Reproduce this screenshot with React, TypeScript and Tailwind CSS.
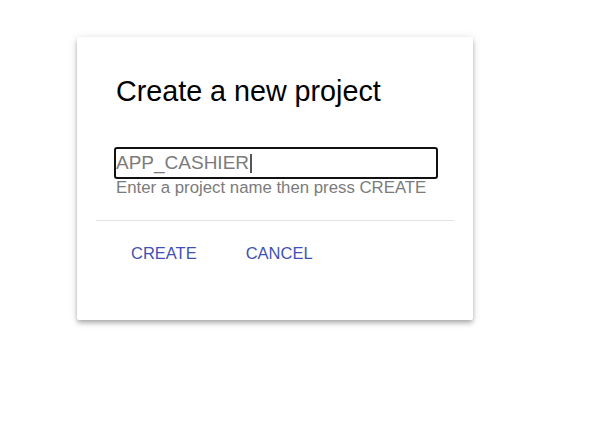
import React from "react";

const NewProjectDialog = () => {
  return (
    <div className="w-[396px] h-[283px] bg-white rounded-[2px] shadow-[0_2px_4px_-1px_rgba(0,0,0,0.2),0_4px_5px_0_rgba(0,0,0,0.14),0_1px_10px_0_rgba(0,0,0,0.12)] pt-[38px] flex flex-col">
      {/* Title */}
      <h2 className="pl-[39px] text-[28.7px] leading-[33px] text-black font-normal">
        Create a new project
      </h2>

      {/* Project name field */}
      <div className="mt-[39px] ml-[37px] mr-[35px]">
        <div className="h-[32px] border-2 border-[#111] rounded-[3px] flex items-center">
          <span className="text-[19px] leading-[22px] text-[#7b7b7b]">APP_CASHIER</span>
          <span className="w-[2px] h-[19px] bg-[#555] ml-[1px]" />
        </div>
        <p className="pl-[2px] text-[16.8px] leading-[18px] text-[#7b7b7b]">
          Enter a project name then press CREATE
        </p>
      </div>

      <div className="mt-[23px] mx-[19px] h-px bg-[#e2e2e2]" />

      {/* Actions */}
      <div className="mt-[20px] ml-[54px] flex items-center gap-[49px]">
        <button className="text-[16.5px] leading-[24px] text-[#3f51b5] cursor-pointer">
          CREATE
        </button>
        <button className="text-[16.5px] leading-[24px] text-[#3f51b5] cursor-pointer">
          CANCEL
        </button>
      </div>
    </div>
  );
};

export default function App() {
  return (
    <div className="w-[597px] h-[435px] bg-white pt-[37px] pl-[77px] font-['Liberation_Sans',Arial,sans-serif]">
      <NewProjectDialog />
    </div>
  );
}
